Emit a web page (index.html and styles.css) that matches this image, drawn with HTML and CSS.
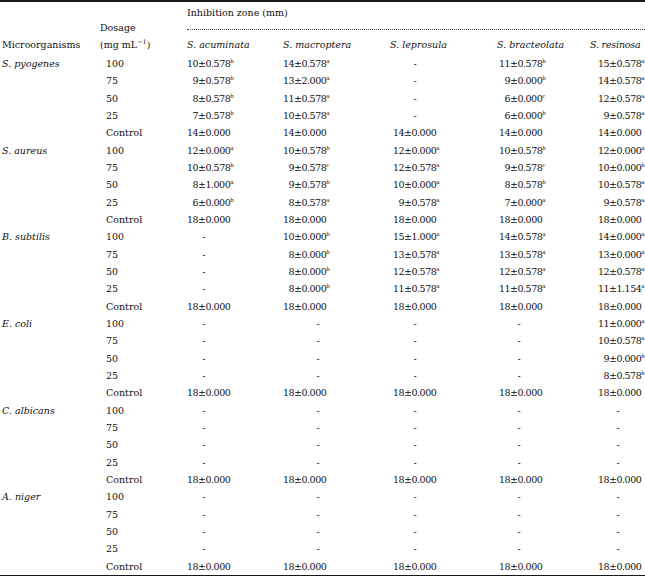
FILE: index.html
```html
<!DOCTYPE html>
<html lang="en">
<head>
<meta charset="utf-8">
<title>Inhibition zone</title>
<link rel="stylesheet" href="styles.css">
</head>
<body>
<div class="tbl">
  <div class="head">
    <div class="h-org">Microorganisms</div>
    <div class="h-dose">Dosage<br>(mg mL<sup class="exp">&minus;1</sup>)</div>
    <div class="h-zone">Inhibition zone (mm)</div>
    <div class="h-sp c3">S. acuminata</div>
    <div class="h-sp c4">S. macroptera</div>
    <div class="h-sp c5">S. leprosula</div>
    <div class="h-sp c6">S. bracteolata</div>
    <div class="h-sp c7">S. resinosa</div>
  </div>

  <div class="row"><div class="org">S. pyogenes</div><div class="dose">100</div>
    <div><span class="n">10±0.578<sup>b</sup></span></div><div><span class="n">14±0.578<sup>a</sup></span></div><div><span class="d">-</span></div><div><span class="n">11±0.578<sup>b</sup></span></div><div><span class="n">15±0.578<sup>a</sup></span></div></div>
  <div class="row"><div class="org"></div><div class="dose">75</div>
    <div><span class="n one">9±0.578<sup>b</sup></span></div><div><span class="n">13±2.000<sup>a</sup></span></div><div><span class="d">-</span></div><div><span class="n one">9±0.000<sup>b</sup></span></div><div><span class="n">14±0.578<sup>a</sup></span></div></div>
  <div class="row"><div class="org"></div><div class="dose">50</div>
    <div><span class="n one">8±0.578<sup>b</sup></span></div><div><span class="n">11±0.578<sup>a</sup></span></div><div><span class="d">-</span></div><div><span class="n one">6±0.000<sup>c</sup></span></div><div><span class="n">12±0.578<sup>a</sup></span></div></div>
  <div class="row"><div class="org"></div><div class="dose">25</div>
    <div><span class="n one">7±0.578<sup>b</sup></span></div><div><span class="n">10±0.578<sup>a</sup></span></div><div><span class="d">-</span></div><div><span class="n one">6±0.000<sup>b</sup></span></div><div><span class="n one">9±0.578<sup>a</sup></span></div></div>
  <div class="row"><div class="org"></div><div class="dose">Control</div>
    <div><span class="n">14±0.000</span></div><div><span class="n">14±0.000</span></div><div><span class="n">14±0.000</span></div><div><span class="n">14±0.000</span></div><div><span class="n">14±0.000</span></div></div>

  <div class="row"><div class="org">S. aureus</div><div class="dose">100</div>
    <div><span class="n">12±0.000<sup>a</sup></span></div><div><span class="n">10±0.578<sup>b</sup></span></div><div><span class="n">12±0.000<sup>a</sup></span></div><div><span class="n">10±0.578<sup>b</sup></span></div><div><span class="n">12±0.000<sup>a</sup></span></div></div>
  <div class="row"><div class="org"></div><div class="dose">75</div>
    <div><span class="n">10±0.578<sup>b</sup></span></div><div><span class="n one">9±0.578<sup>c</sup></span></div><div><span class="n">12±0.578<sup>a</sup></span></div><div><span class="n one">9±0.578<sup>c</sup></span></div><div><span class="n">10±0.000<sup>b</sup></span></div></div>
  <div class="row"><div class="org"></div><div class="dose">50</div>
    <div><span class="n one">8±1.000<sup>a</sup></span></div><div><span class="n one">9±0.578<sup>b</sup></span></div><div><span class="n">10±0.000<sup>a</sup></span></div><div><span class="n one">8±0.578<sup>b</sup></span></div><div><span class="n">10±0.578<sup>a</sup></span></div></div>
  <div class="row"><div class="org"></div><div class="dose">25</div>
    <div><span class="n one">6±0.000<sup>b</sup></span></div><div><span class="n one">8±0.578<sup>a</sup></span></div><div><span class="n one">9±0.578<sup>a</sup></span></div><div><span class="n one">7±0.000<sup>a</sup></span></div><div><span class="n one">9±0.578<sup>a</sup></span></div></div>
  <div class="row"><div class="org"></div><div class="dose">Control</div>
    <div><span class="n">18±0.000</span></div><div><span class="n">18±0.000</span></div><div><span class="n">18±0.000</span></div><div><span class="n">18±0.000</span></div><div><span class="n">18±0.000</span></div></div>

  <div class="row"><div class="org">B. subtilis</div><div class="dose">100</div>
    <div><span class="d">-</span></div><div><span class="n">10±0.000<sup>b</sup></span></div><div><span class="n">15±1.000<sup>a</sup></span></div><div><span class="n">14±0.578<sup>a</sup></span></div><div><span class="n">14±0.000<sup>a</sup></span></div></div>
  <div class="row"><div class="org"></div><div class="dose">75</div>
    <div><span class="d">-</span></div><div><span class="n one">8±0.000<sup>b</sup></span></div><div><span class="n">13±0.578<sup>a</sup></span></div><div><span class="n">13±0.578<sup>a</sup></span></div><div><span class="n">13±0.000<sup>a</sup></span></div></div>
  <div class="row"><div class="org"></div><div class="dose">50</div>
    <div><span class="d">-</span></div><div><span class="n one">8±0.000<sup>b</sup></span></div><div><span class="n">12±0.578<sup>a</sup></span></div><div><span class="n">12±0.578<sup>a</sup></span></div><div><span class="n">12±0.578<sup>a</sup></span></div></div>
  <div class="row"><div class="org"></div><div class="dose">25</div>
    <div><span class="d">-</span></div><div><span class="n one">8±0.000<sup>b</sup></span></div><div><span class="n">11±0.578<sup>a</sup></span></div><div><span class="n">11±0.578<sup>a</sup></span></div><div><span class="n">11±1.154<sup>a</sup></span></div></div>
  <div class="row"><div class="org"></div><div class="dose">Control</div>
    <div><span class="n">18±0.000</span></div><div><span class="n">18±0.000</span></div><div><span class="n">18±0.000</span></div><div><span class="n">18±0.000</span></div><div><span class="n">18±0.000</span></div></div>

  <div class="row"><div class="org">E. coli</div><div class="dose">100</div>
    <div><span class="d">-</span></div><div><span class="d">-</span></div><div><span class="d">-</span></div><div><span class="d">-</span></div><div><span class="n">11±0.000<sup>a</sup></span></div></div>
  <div class="row"><div class="org"></div><div class="dose">75</div>
    <div><span class="d">-</span></div><div><span class="d">-</span></div><div><span class="d">-</span></div><div><span class="d">-</span></div><div><span class="n">10±0.578<sup>a</sup></span></div></div>
  <div class="row"><div class="org"></div><div class="dose">50</div>
    <div><span class="d">-</span></div><div><span class="d">-</span></div><div><span class="d">-</span></div><div><span class="d">-</span></div><div><span class="n one">9±0.000<sup>b</sup></span></div></div>
  <div class="row"><div class="org"></div><div class="dose">25</div>
    <div><span class="d">-</span></div><div><span class="d">-</span></div><div><span class="d">-</span></div><div><span class="d">-</span></div><div><span class="n one">8±0.578<sup>b</sup></span></div></div>
  <div class="row"><div class="org"></div><div class="dose">Control</div>
    <div><span class="n">18±0.000</span></div><div><span class="n">18±0.000</span></div><div><span class="n">18±0.000</span></div><div><span class="n">18±0.000</span></div><div><span class="n">18±0.000</span></div></div>

  <div class="row"><div class="org">C. albicans</div><div class="dose">100</div>
    <div><span class="d">-</span></div><div><span class="d">-</span></div><div><span class="d">-</span></div><div><span class="d">-</span></div><div><span class="d">-</span></div></div>
  <div class="row"><div class="org"></div><div class="dose">75</div>
    <div><span class="d">-</span></div><div><span class="d">-</span></div><div><span class="d">-</span></div><div><span class="d">-</span></div><div><span class="d">-</span></div></div>
  <div class="row"><div class="org"></div><div class="dose">50</div>
    <div><span class="d">-</span></div><div><span class="d">-</span></div><div><span class="d">-</span></div><div><span class="d">-</span></div><div><span class="d">-</span></div></div>
  <div class="row"><div class="org"></div><div class="dose">25</div>
    <div><span class="d">-</span></div><div><span class="d">-</span></div><div><span class="d">-</span></div><div><span class="d">-</span></div><div><span class="d">-</span></div></div>
  <div class="row"><div class="org"></div><div class="dose">Control</div>
    <div><span class="n">18±0.000</span></div><div><span class="n">18±0.000</span></div><div><span class="n">18±0.000</span></div><div><span class="n">18±0.000</span></div><div><span class="n">18±0.000</span></div></div>

  <div class="row"><div class="org">A. niger</div><div class="dose">100</div>
    <div><span class="d">-</span></div><div><span class="d">-</span></div><div><span class="d">-</span></div><div><span class="d">-</span></div><div><span class="d">-</span></div></div>
  <div class="row"><div class="org"></div><div class="dose">75</div>
    <div><span class="d">-</span></div><div><span class="d">-</span></div><div><span class="d">-</span></div><div><span class="d">-</span></div><div><span class="d">-</span></div></div>
  <div class="row"><div class="org"></div><div class="dose">50</div>
    <div><span class="d">-</span></div><div><span class="d">-</span></div><div><span class="d">-</span></div><div><span class="d">-</span></div><div><span class="d">-</span></div></div>
  <div class="row"><div class="org"></div><div class="dose">25</div>
    <div><span class="d">-</span></div><div><span class="d">-</span></div><div><span class="d">-</span></div><div><span class="d">-</span></div><div><span class="d">-</span></div></div>
  <div class="row"><div class="org"></div><div class="dose">Control</div>
    <div><span class="n">18±0.000</span></div><div><span class="n">18±0.000</span></div><div><span class="n">18±0.000</span></div><div><span class="n">18±0.000</span></div><div><span class="n">18±0.000</span></div></div>
</div>
</body>
</html>
```

FILE: styles.css
```css
html, body {
  margin: 0;
  padding: 0;
  background: #ffffff;
}

.tbl {
  width: 645px;
  font-family: "DejaVu Serif", "Liberation Serif", serif;
  font-size: 9.5px;
  color: #111111;
  border-top: 2px solid #1a1a1a;
  border-bottom: 2px solid #1a1a1a;
  overflow: hidden;
}

.head,
.row {
  display: grid;
  grid-template-columns: 100px 87px 96px 110px 106px 99px 47px;
  white-space: nowrap;
}

.head {
  grid-template-rows: auto auto;
}

.h-org {
  grid-column: 1;
  grid-row: 1 / 3;
  align-self: end;
  padding: 0 0 2px 2px;
  line-height: 17px;
}

.h-dose {
  grid-column: 2;
  grid-row: 1 / 3;
  align-self: end;
  padding-bottom: 2px;
  line-height: 17px;
}

.exp {
  font-size: 6.5px;
  line-height: 0;
  vertical-align: 4px;
}

.h-zone {
  grid-column: 3 / 8;
  grid-row: 1;
  padding: 3px 0 8px;
  line-height: 16px;
  border-bottom: 1px dotted #444444;
}

.h-sp {
  grid-row: 2;
  padding: 7px 0 2px;
  line-height: 16px;
  font-style: italic;
}

.c3 { grid-column: 3; }
.c4 { grid-column: 4; }
.c5 { grid-column: 5; margin-left: -3px; }
.c6 { grid-column: 6; margin-left: -2px; }
.c7 { grid-column: 7; margin-left: -8px; letter-spacing: -0.2px; }

.row {
  height: 17.33px;
  line-height: 17.33px;
}

.org {
  padding-left: 2px;
  font-style: italic;
}

.dose {
  padding-left: 6px;
}

.n {
  display: inline-block;
  letter-spacing: -0.5px;
}

.n.one {
  padding-left: 5.5px;
}

.d {
  display: inline-block;
  width: 40px;
  text-align: center;
}

.row > div:nth-child(3) .d { width: 34px; }
.row > div:nth-child(4) .d { width: 70px; }
.row > div:nth-child(5) .d { width: 44px; }

sup {
  font-size: 5.5px;
  line-height: 0;
  letter-spacing: 0;
  vertical-align: 4px;
}
```
